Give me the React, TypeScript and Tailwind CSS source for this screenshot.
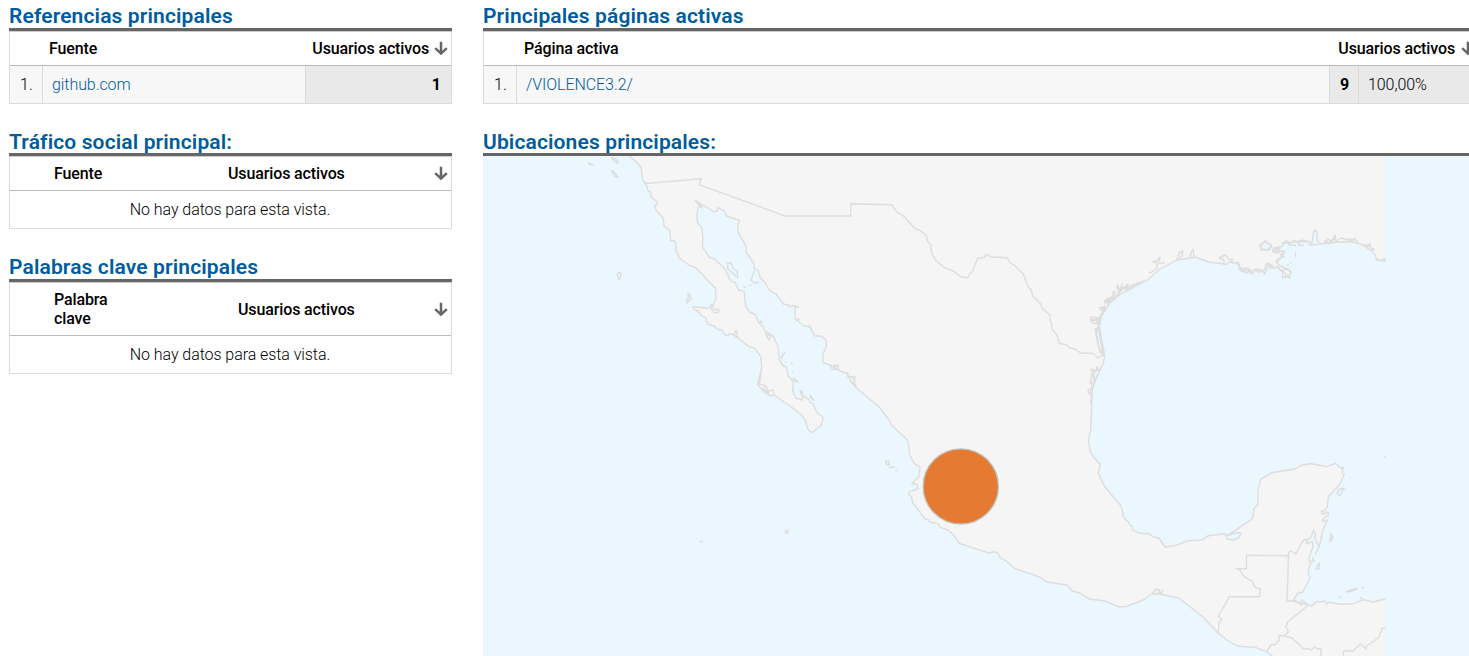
import type { ReactNode } from "react";

function SortArrow() {
  return (
    <svg width="14" height="15" viewBox="0 0 14 15" className="shrink-0" fill="none" stroke="#666" strokeWidth="2.5">
      <path d="M7 0.8V12.5M1.2 7.2L7 12.6L12.8 7.2" />
    </svg>
  );
}

function Panel({
  title,
  className = "",
  titleClass = "pt-[4px]",
  children,
}: {
  title: string;
  className?: string;
  titleClass?: string;
  children: ReactNode;
}) {
  return (
    <section className={className}>
      <h2
        className={`h-[31px] whitespace-nowrap border-b-[3px] border-[#666] text-[21px] font-semibold leading-[24px] tracking-[0.13px] text-[#005c9c] ${titleClass}`}
      >
        {title}
      </h2>
      {children}
    </section>
  );
}

function EmptyTable({ heading, headClass, valueClass }: { heading: string; headClass: string; valueClass: string }) {
  return (
    <div className="border border-[#dadada] border-t-[#ccc]">
      <div className={`flex items-center border-b border-[#bbb] pr-[3px] font-medium leading-[19px] tracking-[-0.13px] text-black ${headClass}`}>
        <span className="ml-[44px] w-[60px]">{heading}</span>
        <span className={`flex-1 whitespace-nowrap ${valueClass}`}>Usuarios activos</span>
        <SortArrow />
      </div>
      <div className="flex h-[37px] items-center justify-center pr-[1px] font-light tracking-[-0.07px] text-black">No hay datos para esta vista.</div>
    </div>
  );
}

const LAND =
  "M629 150V156L637.3 162.7L641.3 168L642.3 179L646 184L647.7 190.3L650.3 192L651.3 197.3L657.3 201.7L656.7 205L654.7 205L656.3 210.7L663.3 218.3L664 226L670 230.3L670.7 240.7L674.3 240.7L676 243.3V252L678.3 254L679 258L690 265.7L695.7 267.7L716 289L715.3 295L716 297.3L714.3 303.3L708.3 308.3L692.7 306.7L694 309.3L698 311L701 315.3L705.7 318L707.7 324.3L713.7 325.7L717.3 329.3L721.3 329.7L726.3 335.7L730 334L734 334.7L748.3 346.3L755 348.3L760.7 356.7L761.7 368.3L759.3 377.3L757.3 384.3L760.7 388L765 392.7L770.7 396L774 395L791.7 407.3L801.7 415L806 421.7L808 429.3L811.7 432.7L821.7 425L823 417.3L817 413L813 403.7L810 402.7L809.3 400L803 395.7L802 400L795.7 398L792.7 391L793.3 381.7L788.3 375.7L786 366.7L783 366L779.3 359.7L778 346.7L775.3 340.7L773.7 336.7L767.7 332.7L764 330L763.3 326.7L759 323.3L755.3 314.7L749.7 312L745.7 306.3L744.3 291.7L738.3 290L735 282.3L731 281L729 278.7L728.3 275.7L724 267.7L713.3 258.3L709.3 257.3L702.3 246.7L703 237.3L701.7 227.3L698 223.3L697 219L697.3 211L699.3 205L695.3 200.3L702.7 205L714 211.7L717.3 211L717.7 207.7L724.3 211L726.3 216L739.7 220.3L737.7 224L738.3 232.7L746 246L746.3 253.3L748.3 255L754.3 264.3V268.3L758.3 270.7L760.3 278L764.3 281.7L770 291L775.7 293.7L783.3 304L788.3 305L790 307L792 305.5L798.3 306.7L795 307V319L798 321L803.3 325.7L810 326.7L814.3 335.7L821.7 336.3L826 340L826.3 346.7L822.7 354.3L823 362.7L830 365L838.3 370L847.3 374L850.7 381.7L856.7 388.3L879 406.7L889.3 420L891.7 425.3L906.7 439.3L909 446L909.3 454L914 463.3L920 467L919 476.7L911.7 483.3L916.7 484.3L918.3 488.7L910 491.3L908.3 493.3L911.7 497.3L912.7 503.3L920 512L925 519L928.3 519.3L929.7 522L938.3 523.7L940.3 527.3L948 530L954 535.3L959.3 543.3L988.7 553L995 551.7L998 553.7L1001 558.7L1005.3 560.3L1015 568.7L1040 577L1046 581.7L1067.3 585.3L1072.3 591L1080 593L1090 599.3L1104.3 600.7L1118.3 606.7H1126L1143.3 600L1151.7 594H1160L1179.3 598.3L1203.3 617.3L1218 633L1228.3 641L1238.3 646.3L1255 647.3L1266.7 651.7L1273.3 656.7V670H1395V597.5L1385 599L1373.3 602L1363.3 599.7L1360.5 597.5L1363 600L1353.3 603.7L1340 604.3L1329.3 602.3L1327 604L1324.3 601L1320 602L1316.7 601.5L1311.7 606L1308.3 605L1301.7 600L1301 605.3L1298.3 602.3L1293.3 600L1298.3 593L1302.7 592.3L1309.3 579.7L1310 576.5L1308.5 575L1308.7 568.7L1310.7 563.3L1308.7 559L1313 546.7L1312.3 541.7L1307 543.7L1307.7 539L1311 537.3L1313.7 530L1315.3 534.3L1315 538.3L1319 546.7L1315.5 554L1319.5 546L1322.3 531.7L1327.3 520L1322.7 521.7V519.3L1328.3 515.3L1328 512L1322.7 514.3L1321.3 511L1325 510.5L1327.3 506.7L1328.3 496.7L1340 484L1344.3 474.3L1342.3 473L1343 467L1341.5 468.5L1335.3 463.3L1327.3 466.7L1311 463.7L1301 465.3L1295 469L1271.7 472.7L1260.7 479.3L1258 490.7V504L1253.7 509L1253.3 516.7L1250.7 520L1235 530.7L1226 536L1224.3 533.7L1208.3 535.7L1202 540L1188.7 540.7L1175 545.7L1165 547L1159.3 538.3L1152.7 536.7L1149.7 534L1138.7 533L1132.3 529.7L1132 526L1130 525.5L1128.3 521.7L1124 518.3L1121 505.7L1104.7 486.7L1098.3 473.3L1100.3 464.3L1093.3 456.7L1090.3 451.7L1088.3 440L1090.7 430L1092.3 390L1096 378.3L1103.3 363.3L1104.7 355L1101.7 340L1099.3 326.7L1101.3 316.7L1110 302.7L1121.7 293.3L1147.3 280L1160 269L1176.7 260L1196 257.3L1208.3 262L1220 263.3L1226 264.5L1230 261.5L1233 263L1236.7 262.5L1239 265L1239.5 270L1244 271L1247 270L1253 274L1255 269L1262 270L1265 274L1266 270L1269 265.5L1274 268L1278 267L1282.7 271.7L1282.5 278L1286 276L1290 278L1289 274.5L1291.5 272.5L1287.7 269L1280 266L1276 261.7L1279 258L1284 257L1281.5 254L1285 251.5L1280 251L1276 252.5L1272.7 251.5L1273.5 248L1281.7 246.5L1284 242.5L1290 243.5L1292 241.5L1297 242L1301 240.5L1303 242L1308 241.5L1312 243.5L1313.5 232L1315.5 230L1317 232V240L1320 244L1340 241.7L1353.3 242L1361.7 244.3L1370 250L1375 254.3L1376.7 260L1385 260.7H1395V150Z";

const BORDERS = [
  "M646 183.5L701.3 178.7L699 184.7L785 216H850.7V203.8L891.7 204.7L896.7 212L902.7 215.3L915.3 228.7L919.3 230L926 235.3L927.7 241L930.7 245L931.7 253.3L936 260.7L945 268L952.3 270.7L961.7 277L967.7 277.7L971 272.3L973.3 271.3L973.7 267.7L977.7 258.3L984.3 257.3L986 254.3L991.7 257L1007.3 257.7L1010 262.7L1015.3 266L1023.3 274L1027.7 286L1031.3 290L1032.7 296L1040.7 304L1042 308.3L1050 314.7L1050.3 321L1051.7 323V328.3L1057 335.3L1059.3 343.3L1066.7 345L1070 348L1075 349L1080.7 353L1092.7 353.3L1098.3 358L1101.5 355.5H1105",
  "M1218 633L1219.3 621.5L1222 620L1218.3 616L1229.5 596.7H1259.7L1260.3 588.7L1255 587.3L1252.3 581.3L1244.3 576.7L1239.7 570L1236 568.7H1246.5V555.3L1288.5 555.7L1287 601H1293L1308.3 605",
  "M1288.5 555.7L1288.7 552.3L1291 551L1295.7 554L1303 540.5L1307.5 539",
  "M1308.3 605L1288 621.7L1286 627L1288.3 632L1284.5 636L1278.5 635.5L1279.5 640L1275 644.5L1271 645L1266.7 651.7",
  "M1284.5 636L1292 638L1304 649L1308.5 648.5L1311 650L1315 647L1317 648.7H1321V657",
  "M1343.5 657V651H1353L1360.5 644L1366 649V646L1371.5 643L1376 639.5L1379.5 637V634L1381.5 632V629L1386 627",
];

const SHORE_DETAILS = [
  // California and Baja islands
  "M611.5 158L616 159L618.5 163L615 161.8ZM611.5 171L613 171L618 177L614.5 176ZM588.5 163L593 165L589 164.5Z",
  "M617.5 273.5L620 272L620.7 275L619.5 280L617.5 276Z",
  "M688 293.5L690.5 296L691 299L687 303L686.5 300L688.5 298Z",
  "M727.5 263.5L731 263L733 268L737 271L738 278L728 269Z",
  "M754.3 270.7L751 280.5L755 283.5L759 282",
  "M743 286L746 288M749.5 284.5L751 286",
  "M695 200L700 204.5L702.5 208L699 206",
  "M714 306L710.5 305L711.5 309L714 313L718.5 312L719.5 310L717 309L715 310L712.5 307",
  "M734 334L736.5 330L737 335L738.5 338L735 336Z",
  "M762 323.5L760 321.5L762 321.5M765 333L771 336L769 340L765.5 333",
  "M781 358.5L785 352L782 356ZM785.7 362L786.5 363M791.5 362L792.2 364.5M792.5 373.5L793.5 371.5M793.3 378L796.5 380L797.5 382.5L794 380ZM800 390.5L803 392.5L801.5 395ZM810 395L814 400.5L811 398Z",
  "M761.5 368L759.5 384L766 386L768 391L773 390L774 395M761 377L758 383M763 387L767 393M767 390L770 396",
  "M795 320L799 319L798 321M809 325.5L811 328",
  "M830 364L832 369L838 369.5L838.5 365L834 365.5L836 368M847 372L848 377L855 376.5L854 382L856 386L850 380M851 377L856 381",
  // Pacific islands
  "M886 461L889 461.5L889 465L886 464ZM889 467.5L895 467M895.5 470L897 471M699.5 541.5H702.5M785.5 530.5H788V533H785.5Z",
  // Texas coast
  "M1104 355L1100.5 341L1098 326L1100.5 315L1106 307M1095 329L1097 341L1098.5 346L1100 352L1102.5 354M1095 329L1098 328L1098.5 324L1092 323L1090 319L1095 320L1099 318L1090 317M1100.5 315L1103 312L1099.5 308L1103 307L1107 309M1103.5 301L1109 298L1107 303M1108 299L1112 298L1113 292L1115 292L1114 297L1119 294L1117 286L1120 290L1122 284L1120 291L1127 286L1126 290L1134 287M1110 302L1123 289L1144 281",
  "M1104 302L1109 300L1105 304L1111 297L1108 305M1091 321L1098 320M1097 318L1100 323L1096 322M1117 284L1119 289L1125 287L1128 284L1126 292M1102 310L1105 306",
  "M1149 273L1152 272L1157 268L1157 263L1153 262L1158 260L1160 257L1159 263L1165 263M1177 260L1179 253L1183 251L1182 256L1179 258M1190 257L1191 253L1193 249L1194 257",
  "M1219 258L1225 255L1229 259L1233 260L1230 263M1219 258L1224 260L1224 263M1236 264L1238 262L1241 269L1248 268L1251 272",
  // Louisiana, Alabama and Florida
  "M1260 245L1265 241L1269 244L1272 246L1269 250L1261 250ZM1272 250L1280 249L1278 254M1282 271L1286 269L1291 272M1277 266L1280 270L1284 272M1264 270L1267 263L1271 267",
  "M1240 268L1245 269L1249 272L1252 270L1250 274M1241 271L1248 273M1255 270L1259 272L1263 271M1268 263L1273 266L1270 269M1273 250L1278 248L1275 253M1280 255L1284 253L1280 259L1277 262M1283 272L1287 275L1285 278",
  "M1282 244L1286 241L1290 243M1293 240L1299 243L1303 240L1309 242M1314 231L1317 231",
  "M1288 245L1296 245.5M1298 245L1304 245.5M1308 245L1318 244.5M1295.5 252V257M1290.5 262V263.5M1287 265H1289",
  "M1324 244L1328 239L1332 242L1335 235L1336 241L1341 238L1347 240L1355 239L1358 242M1363 244L1368 247L1370 243L1371 249L1374 249L1372 252M1376 259L1381 261L1385 258V262",
  "M1324 241L1330 243L1333 238L1337 242M1347 238L1351 241L1356 239M1365 245L1371 246",
  // Gulf coast lagoons
  "M1092 390L1091 378L1093 374L1091 369L1096 371L1097 367L1099 370M1091 374L1096 379M1091 404V389L1088 390L1090 395M1089 382L1093 384",
  // Yucatan and Caribbean islands
  "M1337 493L1340 489L1344.5 488L1339.5 496ZM1331 534L1333 537L1330 542ZM1312 557L1314 561L1311 562M1316 568L1319.5 563L1319 569L1316 569ZM1384 457H1386M1338.5 597H1341M1346 592L1351 590L1357 588.5L1352 591ZM1362 588L1364 587",
  "M1152 594L1156 589L1160 590L1158 593L1162 593L1163 590",
];

const LAGOONS =
  "M1226 536L1235 533L1241 533L1239 538L1233 540L1227 539ZM1096 329L1100 331L1103 353L1099 348ZM1094 372L1098 370L1100 370L1094 383ZM1261 245L1265.5 241L1271 246L1268 250L1261 249Z";

function LocationMap() {
  return (
    <svg width="986" height="500" viewBox="483 156 986 500" className="block" role="img" aria-label="México">
      <defs>
        <clipPath id="mapExtent">
          <rect x="483" y="150" width="902.6" height="520" />
        </clipPath>
      </defs>
      <rect x="483" y="156" width="986" height="500" fill="#eaf7fe" />
      <g clipPath="url(#mapExtent)" stroke="#dddddd" strokeWidth="1.4" strokeLinejoin="round" fill="none">
        <path d={LAND} fill="#f5f5f5" />
        <path d={LAGOONS} fill="#eaf7fe" />
        {BORDERS.map((d) => (
          <path key={d} d={d} />
        ))}
        {SHORE_DETAILS.map((d) => (
          <path key={d} d={d} />
        ))}
      </g>
      <circle cx="960.8" cy="486.4" r="37.6" fill="#e57b32" stroke="#c3c0bc" strokeWidth="1.3" />
    </svg>
  );
}

export default function App() {
  return (
    <main className="flex h-[656px] w-full gap-[31px] overflow-hidden bg-white pl-[9px] font-['Roboto',sans-serif] text-[16px] leading-[19px]">
      <div className="w-[443px] shrink-0">
        <Panel title="Referencias principales" className="mb-[21px]">
          <div className="border border-[#dadada] border-t-[#ccc]">
            <div className="flex h-[34px] items-center border-b border-[#bbb] pr-[3px] font-medium tracking-[-0.13px] text-black">
              <span className="ml-[39px] flex-1">Fuente</span>
              <span className="mr-[5px]">Usuarios activos</span>
              <SortArrow />
            </div>
            <div className="flex h-[37px] items-stretch">
              <span className="flex w-[33px] items-center border-r border-[#dadada] bg-[#f7f7f7] pl-[10px] font-light text-black">1.</span>
              <a className="flex flex-1 items-center bg-[#f7f7f7] pl-[9px] font-light tracking-[-0.07px] text-[#005c9c]">github.com</a>
              <span className="flex w-[146px] items-center justify-end border-l border-[#dadada] bg-[#e9e9e9] pr-[10px] font-bold text-black">1</span>
            </div>
          </div>
        </Panel>
        <Panel title="Tráfico social principal:" className="mb-[22px]" titleClass="pt-[5px]">
          <EmptyTable heading="Fuente" headClass="h-[34px]" valueClass="pl-[114px]" />
        </Panel>
        <Panel title="Palabras clave principales">
          <EmptyTable heading="Palabra clave" headClass="h-[53px]" valueClass="pl-[124px]" />
        </Panel>
      </div>
      <div className="w-[996px] shrink-0">
        <Panel title="Principales páginas activas" className="mb-[21px]">
          <div className="border border-[#dadada] border-t-[#ccc]">
            <div className="flex h-[34px] items-center border-b border-[#bbb] pr-[3px] font-medium tracking-[-0.13px] text-black">
              <span className="ml-[40px] flex-1">Página activa</span>
              <span className="mr-[6px]">Usuarios activos</span>
              <SortArrow />
            </div>
            <div className="flex h-[37px] items-stretch">
              <span className="flex w-[33px] items-center border-r border-[#dadada] bg-[#f7f7f7] pl-[10px] font-light text-black">1.</span>
              <a className="flex flex-1 items-center bg-[#f7f7f7] pl-[9px] font-light tracking-[-0.07px] text-[#005c9c]">/VIOLENCE3.2/</a>
              <span className="flex w-[29px] items-center border-l border-[#dadada] bg-[#e9e9e9] pl-[10px] font-bold text-black">9</span>
              <span className="flex w-[120px] items-center border-l border-[#dadada] bg-[#e9e9e9] pl-[9px] font-light tracking-[-0.07px] text-black">100,00%</span>
            </div>
          </div>
        </Panel>
        <Panel title="Ubicaciones principales:" titleClass="pt-[5px]">
          <LocationMap />
        </Panel>
      </div>
    </main>
  );
}
